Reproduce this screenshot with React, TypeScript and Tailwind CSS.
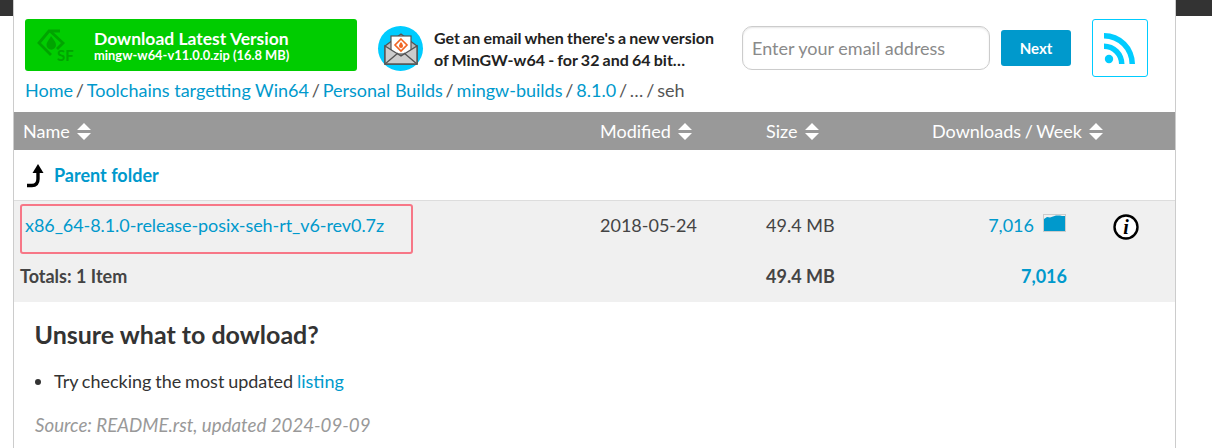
import React from "react";

function Sort({ className = "ml-[7px]" }: { className?: string }) {
  return (
    <svg width="14" height="17" viewBox="0 0 14 17" className={`${className} shrink-0`}>
      <path d="M7 0 L14 7 H0 Z M0 10 H14 L7 17 Z" fill="#fff" />
    </svg>
  );
}

const Slash = () => <span className="text-[#555] [word-spacing:-1.8px]"> / </span>;

export default function App() {
  return (
    <div className="relative h-[448px] w-[1212px] overflow-hidden bg-white font-['Lato',sans-serif] text-[#333]">
      <div className="absolute left-0 top-0 h-4 w-[13px] bg-[#333]" />
      <div className="absolute right-0 top-0 h-4 w-[36px] bg-[#333]" />
      <div className="ml-[13px] h-full w-[1163px] border-x border-[#ccc]">
        <div className="flex h-[71px] items-start pt-[19px]">
          <a className="ml-[11px] flex h-[52px] w-[332px] items-center rounded-[3px] bg-[#00cc00] text-white">
            <svg width="40" height="40" viewBox="0 0 40 40" className="ml-[11px] shrink-0">
              <g fill="none" stroke="#00a400" strokeWidth="2.8">
                <path d="M24 6 H13 L3 18 L15 30" />
                <path d="M14 6 L27 18 L21 24" />
              </g>
              <path d="M15 11 C18 15 20 17 20 20 A4.6 4.6 0 0 1 10.5 20 C10.5 17 13 15 15 11 Z" fill="#00a400" />
              <text x="21" y="36" fontSize="15" fontWeight="700" fill="#00a400" fontFamily="Lato, sans-serif">SF</text>
            </svg>
            <div className="ml-[18px] whitespace-nowrap font-bold">
              <div className="text-[17.5px] leading-[20px]">Download Latest Version</div>
              <div className="text-[12.9px] leading-[13px]">mingw-w64-v11.0.0.zip (16.8 MB)</div>
            </div>
          </a>
          <div className="ml-[21px] mt-[7px] flex h-[45px] w-[45px] shrink-0 items-center justify-center rounded-full bg-[#00ccff]">
            <svg width="36" height="34" viewBox="0 0 36 34">
              <path d="M2 14 L18 2 L34 14 V32 H2 Z" fill="#bbb" stroke="#555" strokeWidth="1.4" />
              <rect x="8" y="4" width="20" height="18" fill="#fff" stroke="#555" strokeWidth="1.2" />
              <path d="M18 7 L24 13 L18 19 L12 13 Z" fill="none" stroke="#f26522" strokeWidth="1.6" />
              <path d="M18 10 C19.5 12 20 13 20 14 A2 2 0 0 1 16 14 C16 13 16.5 12 18 10 Z" fill="#f26522" />
              <path d="M2 14 L18 24 L34 14 V32 H2 Z" fill="#ccc" stroke="#555" strokeWidth="1.4" />
              <path d="M2 32 L15 21 M34 32 L21 21" stroke="#555" strokeWidth="1.4" />
            </svg>
          </div>
          <div className="ml-[11px] mt-[8px] w-[295px] shrink-0 text-[16px] font-bold leading-[22px] text-[#222] [word-spacing:-0.7px]">
            <div className="whitespace-nowrap">Get an email when there's a new version</div>
            <div className="whitespace-nowrap">of MinGW-w64 - for 32 and 64 bit…</div>
          </div>
          <input
            placeholder="Enter your email address"
            className="ml-[13px] mt-[7px] h-[44px] w-[248px] rounded-[10px] border border-[#ccc] px-[9px] text-[18px] shadow-[inset_0_1px_2px_rgba(0,0,0,0.1)] outline-none placeholder:text-[#8a8a8a]"
          />
          <button className="ml-[11px] mt-[11px] h-[36px] w-[70px] rounded-[3px] bg-[#0099cc] text-[15px] font-bold text-white">
            Next
          </button>
          <div className="ml-[21px] flex h-[58px] w-[56px] items-center justify-center rounded-[3px] border border-[#00ccff]">
            <svg width="32" height="31" viewBox="0 0 32 31" fill="#00ccff">
              <circle cx="5" cy="26" r="4.2" />
              <path d="M0 10.5 V16 A15 15 0 0 1 15 31 H20.5 A20.5 20.5 0 0 0 0 10.5 Z" />
              <path d="M0 0 V5.5 A25.5 25.5 0 0 1 25.5 31 H31 A31 31 0 0 0 0 0 Z" />
            </svg>
          </div>
        </div>
        <div className="ml-[11px] h-[41px] whitespace-pre pt-[7px] text-[18px] leading-[25px] text-[#0099cc]">
          <a>Home</a><Slash /><a>Toolchains targetting Win64</a><Slash /><a>Personal Builds</a><Slash /><a>mingw-builds</a><Slash /><a>8.1.0</a><Slash /><span className="text-[#555]">…</span><Slash /><span className="text-[#555]">seh</span>
        </div>

        <div className="flex h-[38px] items-center bg-[#999] text-[18px] text-white [word-spacing:-1px]">
          <div className="flex w-[577px] items-center pl-[9px]">Name<Sort /></div>
          <div className="flex w-[166px] items-center pl-[9px]">Modified<Sort /></div>
          <div className="flex w-[175px] items-center pl-[9px]">Size<Sort className="ml-[8px]" /></div>
          <div className="flex items-center">Downloads / Week<Sort /></div>
        </div>

        <div className="flex h-[51px] items-center border-b border-[#ddd] text-[18px] font-bold text-[#0099cc]">
          <svg width="18" height="24" viewBox="0 0 18 24" className="ml-[12px] mt-[1px]">
            <path d="M1 21.5 H6 C10 21.5 12 19 12 15 V6" fill="none" stroke="#000" strokeWidth="3.4" />
            <path d="M12 0 L17.5 9 H6.5 Z" fill="#000" />
          </svg>
          <span className="ml-[10px]">Parent folder</span>
        </div>

        <div className="bg-[#f0f0f0]">
          <div className="relative flex h-[50px] items-start text-[18px] leading-[25px]">
            <a className="ml-[11px] mt-[12px] w-[575px] tracking-[-0.07px] text-[#0099cc]">x86_64-8.1.0-release-posix-seh-rt_v6-rev0.7z</a>
            <div className="mt-[12px] w-[166px] text-[#444]">2018-05-24</div>
            <div className="mt-[12px] w-[214px] text-[#444]">49.4 MB</div>
            <a className="mt-[12px] w-[54px] text-right text-[#0099cc]">7,016</a>
            <div className="ml-[9px] mt-[13px] h-[18px] w-[23px] border border-[#ccc] bg-[#0099cc]">
              <svg viewBox="0 0 21 16" className="block h-full w-full">
                <path d="M0 0 H21 V1 L18 1 L16 0.5 L12 0.5 L9 1.5 L6 2.5 L3 2 L0 4 Z" fill="#f0f0f0" />
              </svg>
            </div>
            <svg width="26" height="26" viewBox="0 0 26 26" className="ml-[47px] mt-[13px]">
              <circle cx="13" cy="13" r="11.5" fill="#fff" stroke="#000" strokeWidth="2.4" />
              <text x="13" y="19.5" textAnchor="middle" fontSize="20" fontWeight="700" fontStyle="italic" fontFamily="Liberation Serif, serif" fill="#000">i</text>
            </svg>
            <div className="pointer-events-none absolute left-[6px] top-[3px] h-[50px] w-[393px] rounded-[3px] border-2 border-[#f77787]" />
          </div>
          <div className="flex h-[51px] items-start text-[18px] font-bold leading-[25px]">
            <div className="ml-[6px] mt-[13px] w-[746px] text-[#444]">Totals: 1 Item</div>
            <div className="mt-[13px] w-[201px] text-[#444]">49.4 MB</div>
            <div className="mt-[13px] w-[100px] text-right text-[#0099cc]">7,016</div>
          </div>
        </div>

        <div className="pl-[21px]">
          <h2 className="-ml-[0.5px] mt-[16px] text-[25px] font-bold leading-[32px] text-[#333]">Unsure what to dowload?</h2>
          <ul className="mt-[19px] list-disc pl-[19px] text-[18px] leading-[25px] [word-spacing:-0.8px]">
            <li>Try checking the most updated <a className="text-[#0099cc]">listing</a></li>
          </ul>
          <p className="mt-[19px] text-[18.7px] italic leading-[25px] text-[#999]">Source: README.rst, updated 2024-09-09</p>
        </div>
      </div>
    </div>
  );
}
